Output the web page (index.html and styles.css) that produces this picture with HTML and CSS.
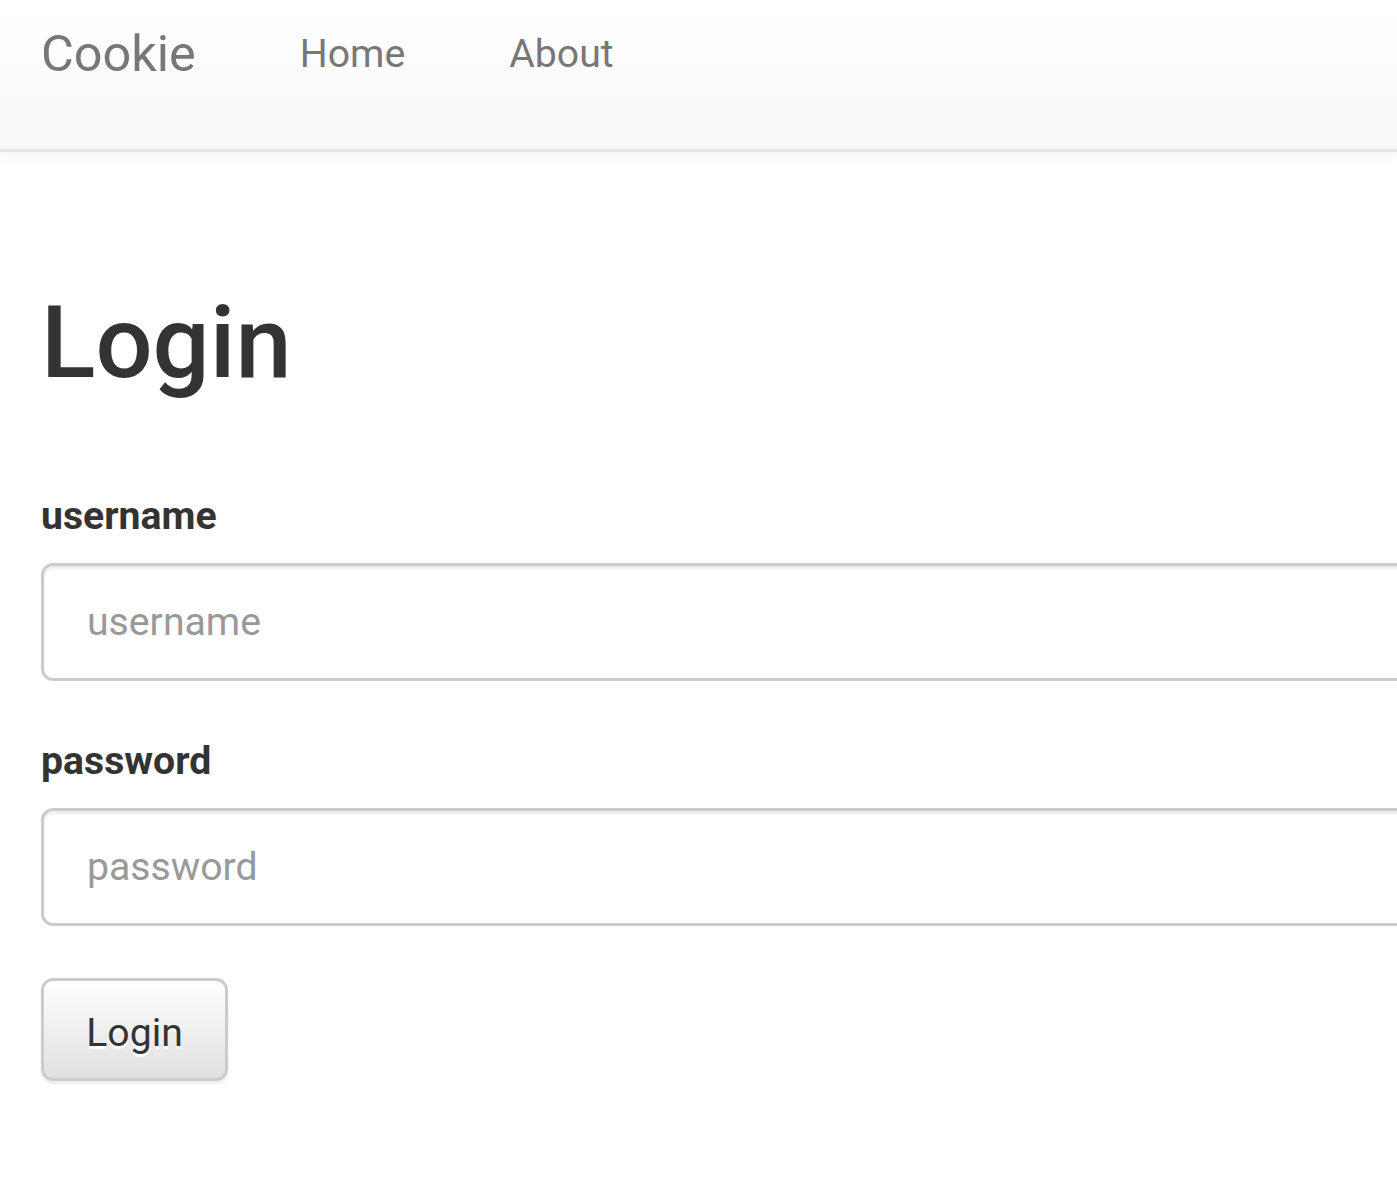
FILE: index.html
```html
<!DOCTYPE html>
<html lang="en">
<head>
<meta charset="utf-8">
<title>Cookie - Login</title>
<link rel="stylesheet" href="styles.css">
</head>
<body>
<nav class="navbar">
  <a class="brand" href="#">Cookie</a>
  <a class="nav-link" href="#">Home</a>
  <a class="nav-link" href="#">About</a>
</nav>
<main class="container">
  <h1 class="title">Login</h1>
  <form class="login-form">
    <div class="form-group">
      <label class="label" for="username">username</label>
      <input class="form-control" id="username" type="text" placeholder="username">
    </div>
    <div class="form-group">
      <label class="label" for="password">password</label>
      <input class="form-control" id="password" type="password" placeholder="password">
    </div>
    <button class="btn" type="submit">Login</button>
  </form>
</main>
</body>
</html>
```
FILE: styles.css
```css
html, body {
  margin: 0;
  padding: 0;
  background: #fff;
  overflow: hidden;
}
body {
  font-family: Roboto, "Liberation Sans", sans-serif;
  color: #333;
}
.navbar {
  display: flex;
  align-items: flex-start;
  box-sizing: border-box;
  height: 152px;
  padding: 26px 0 0 41px;
  background: linear-gradient(to bottom, #fff 0%, #f8f8f8 100%);
  border-bottom: 3px solid #e5e5e5;
  box-shadow: 0 3px 14px rgba(0, 0, 0, 0.06);
  position: relative;
}
.brand {
  font-size: 50.4px;
  line-height: 56px;
  color: #777;
  text-decoration: none;
  margin-right: 52px;
}
.nav-link {
  font-size: 39.2px;
  line-height: 56px;
  color: #777;
  text-decoration: none;
  padding: 0 52px;
}
.container {
  padding: 135px 0 60px 41px;
}
.title {
  margin: 0;
  font-size: 100.8px;
  line-height: 111px;
  font-weight: 500;
  color: #333;
}
.login-form {
  padding-top: 90px;
}
.form-group {
  margin-bottom: 52px;
}
.label {
  display: block;
  font-size: 39.2px;
  line-height: 56px;
  font-weight: 700;
  color: #333;
  margin-bottom: 19px;
}
.form-control {
  display: block;
  box-sizing: border-box;
  width: calc(100% + 60px);
  height: 118px;
  margin: 0;
  padding: 0 43px;
  font-family: Roboto, "Liberation Sans", sans-serif;
  font-size: 39.2px;
  color: #555;
  background: #fff;
  border: 3px solid #ccc;
  border-radius: 12px;
  box-shadow: inset 0 3px 3px rgba(0, 0, 0, 0.075);
  outline: none;
}
.form-control::placeholder {
  color: #999;
  opacity: 1;
}
.btn {
  display: block;
  box-sizing: border-box;
  margin-top: 2px;
  width: 187px;
  height: 103px;
  padding: 6px 0 0 0;
  font-family: Roboto, "Liberation Sans", sans-serif;
  font-size: 39.2px;
  color: #333;
  text-shadow: 0 3px 0 #fff;
  background: linear-gradient(to bottom, #fff 0%, #e0e0e0 100%);
  border: 3px solid #ccc;
  border-radius: 12px;
  box-shadow: inset 0 3px 0 rgba(255, 255, 255, 0.15), 0 3px 3px rgba(0, 0, 0, 0.075);
}
```
